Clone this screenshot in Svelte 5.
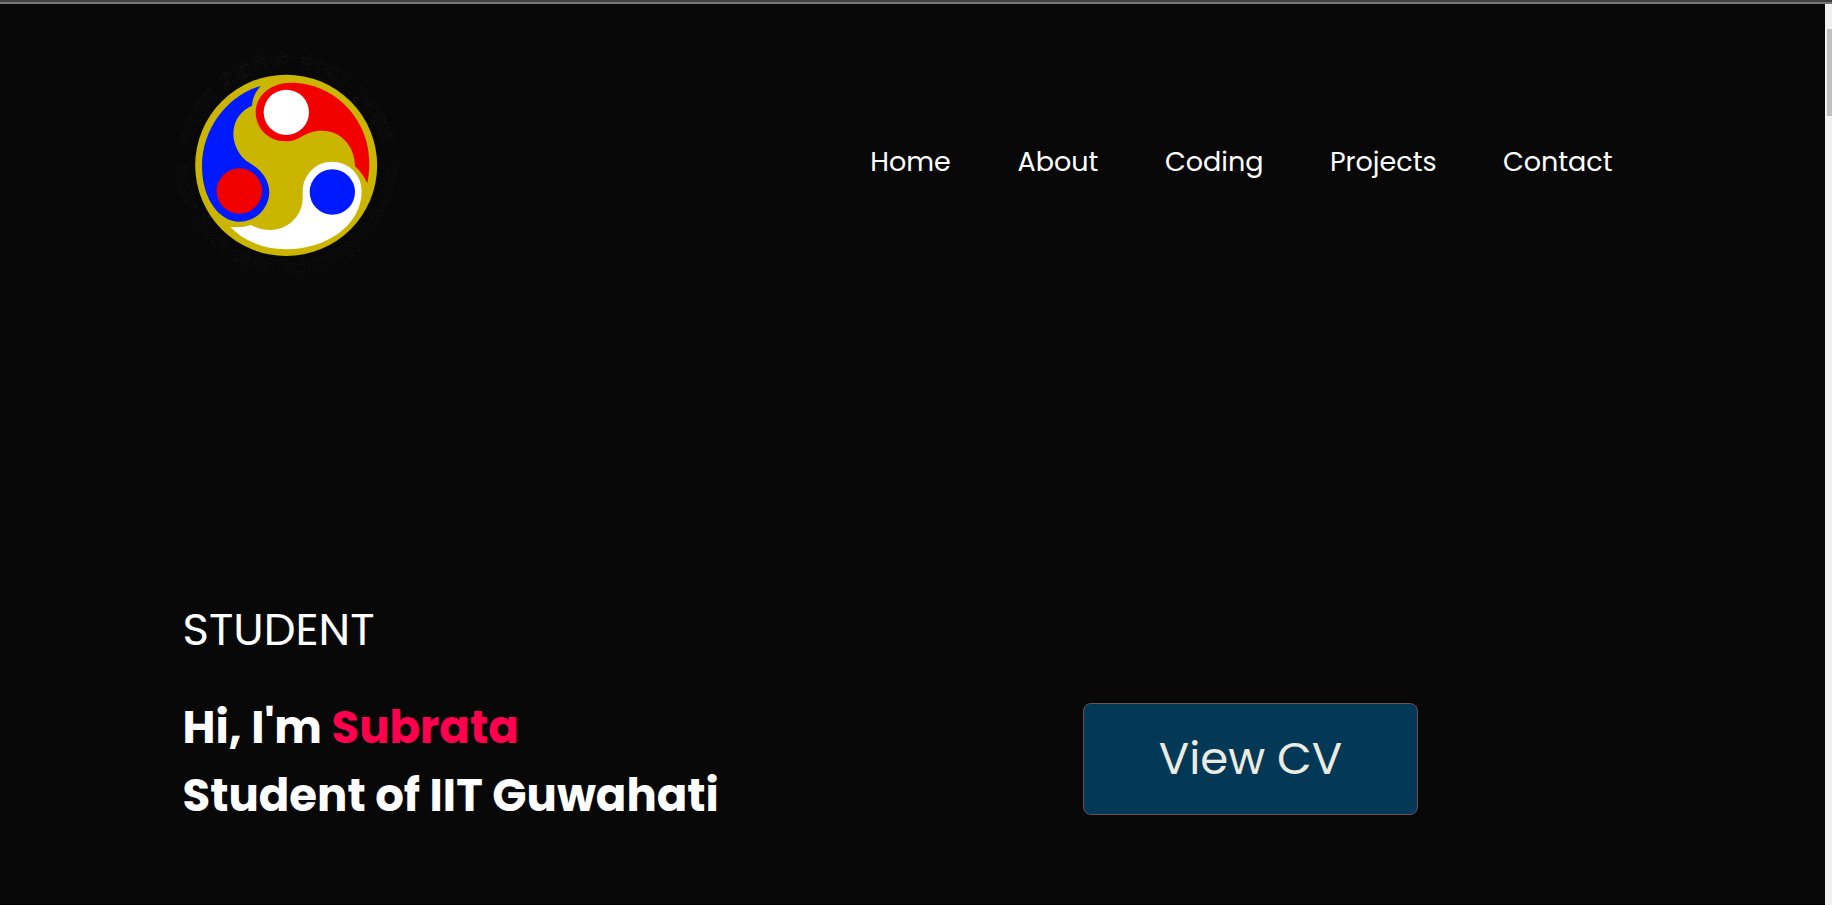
<script>
  const links = ['Home', 'About', 'Coding', 'Projects', 'Contact'];
</script>

<div class="window">
  <main class="page">
    <header>
      <svg class="logo" viewBox="0 0 720 720" role="img" aria-label="Indian Institute of Technology Guwahati">
        <defs>
          <path id="upper" d="M65 315 A291 291 0 0 1 635 315" />
          <path id="lower" d="M21 370 A329 329 0 0 0 679 370" />
        </defs>
        <g class="ring-text">
          <text font-size="54" textLength="790"><textPath href="#upper" textLength="790">भारतीय प्रौद्योगिकी संस्थान गुवाहाटी</textPath></text>
          <text font-size="51" textLength="1025"><textPath href="#lower" textLength="1025">Indian Institute of Technology Guwahati</textPath></text>
          <circle cx="40" cy="342" r="6" />
          <circle cx="660" cy="344" r="6" />
        </g>
        <ellipse cx="348.5" cy="376" rx="273" ry="272" fill="#cab500" />
        <path fill="#001aff" d="M272 138C180 162 96 260 96 378C96 480 150 545 208 545A90 90 0 0 0 298 458C298 420 272 388 240 370C205 350 190 310 190 282C190 240 215 210 246 197C247 175 257 155 272 138Z" />
        <path fill="#f20000" d="M362 128C500 128 598 245 598 365C598 390 596 410 592 430C582 408 570 392 555 378C554 320 515 272 455 272C400 272 395 304 346 304C295 304 257 265 257 217C257 165 305 128 362 128Z" />
        <path fill="#fff" d="M487 365A88 88 0 0 1 575 453C575 555 470 628 348 628C280 628 220 602 181 561C205 563 225 561 243 555C262 566 280 570 302 570C354 570 398 527 398 475V455C398 405 437 365 487 365Z" />
        <circle cx="349" cy="217" r="68" fill="#fff" />
        <circle cx="208" cy="453" r="68" fill="#f20000" />
        <circle cx="487" cy="456" r="68" fill="#001aff" />
      </svg>
      <nav>
        {#each links as link}
          <a href="#{link.toLowerCase()}">{link}</a>
        {/each}
      </nav>
    </header>
    <section class="hero">
      <div class="intro">
        <p>STUDENT</p>
        <h1>
          Hi, I'm <span>Subrata</span><br />
          Student of IIT Guwahati
        </h1>
      </div>
      <button>View CV</button>
    </section>
  </main>
  <aside class="scrollbar"><div class="thumb"></div></aside>
</div>

<style>
  :global(body) {
    background: #080808;
    overflow: hidden;
  }
  .window {
    box-sizing: border-box;
    height: 905px;
    display: flex;
    border-top: 2px solid #404040;
    background: #080808;
    font-family: Poppins, Inter, "Open Sans", sans-serif;
    color: #fff;
    box-shadow: inset 0 2px #747474;
  }
  .page {
    flex: 1;
    padding: 38px 0 0 170px;
    border-bottom: 1px solid #000;
  }
  header {
    display: flex;
    height: 240px;
  }
  .logo {
    width: 240px;
    height: 240px;
    flex: none;
  }
  .ring-text {
    fill: #020202;
    stroke: #1d1d1d;
    stroke-width: 2;
    stroke-dasharray: 4 3;
    font-family: "Noto Sans", "Noto Sans Devanagari", sans-serif;
  }
  nav {
    display: grid;
    grid-template-columns: 147.3px 147.3px 165px 173px 120px;
    margin-left: 460.3px;
    padding-top: 102px;
    height: 40px;
    line-height: 40px;
    font-size: 27px;
  }
  a {
    color: #fff;
    text-decoration: none;
    white-space: nowrap;
  }
  .hero {
    display: flex;
    padding-left: 12.5px;
    margin-top: 316px;
  }
  .intro {
    width: 900.5px;
    white-space: nowrap;
    font-size: 45px;
    line-height: 67.5px;
  }
  p {
    margin: 0;
  }
  h1 {
    margin: 30.5px 0 0;
    font-size: 45px;
    font-weight: 700;
  }
  h1 span {
    color: #ff004f;
  }
  button {
    box-sizing: border-box;
    width: 335px;
    height: 112px;
    margin-top: 107px;
    padding: 0;
    border: 1px solid #704b5b;
    border-radius: 8px;
    background: #033957;
    color: #ebebe0;
    font: 400 45px/110px Poppins, Inter, "Open Sans", sans-serif;
  }
  .scrollbar {
    width: 7px;
    margin-top: 2px;
    background: #f1f1f1;
  }
  .thumb {
    height: 87px;
    margin: 25px 0 0 2px;
    background: #c1c1c1;
  }
</style>
